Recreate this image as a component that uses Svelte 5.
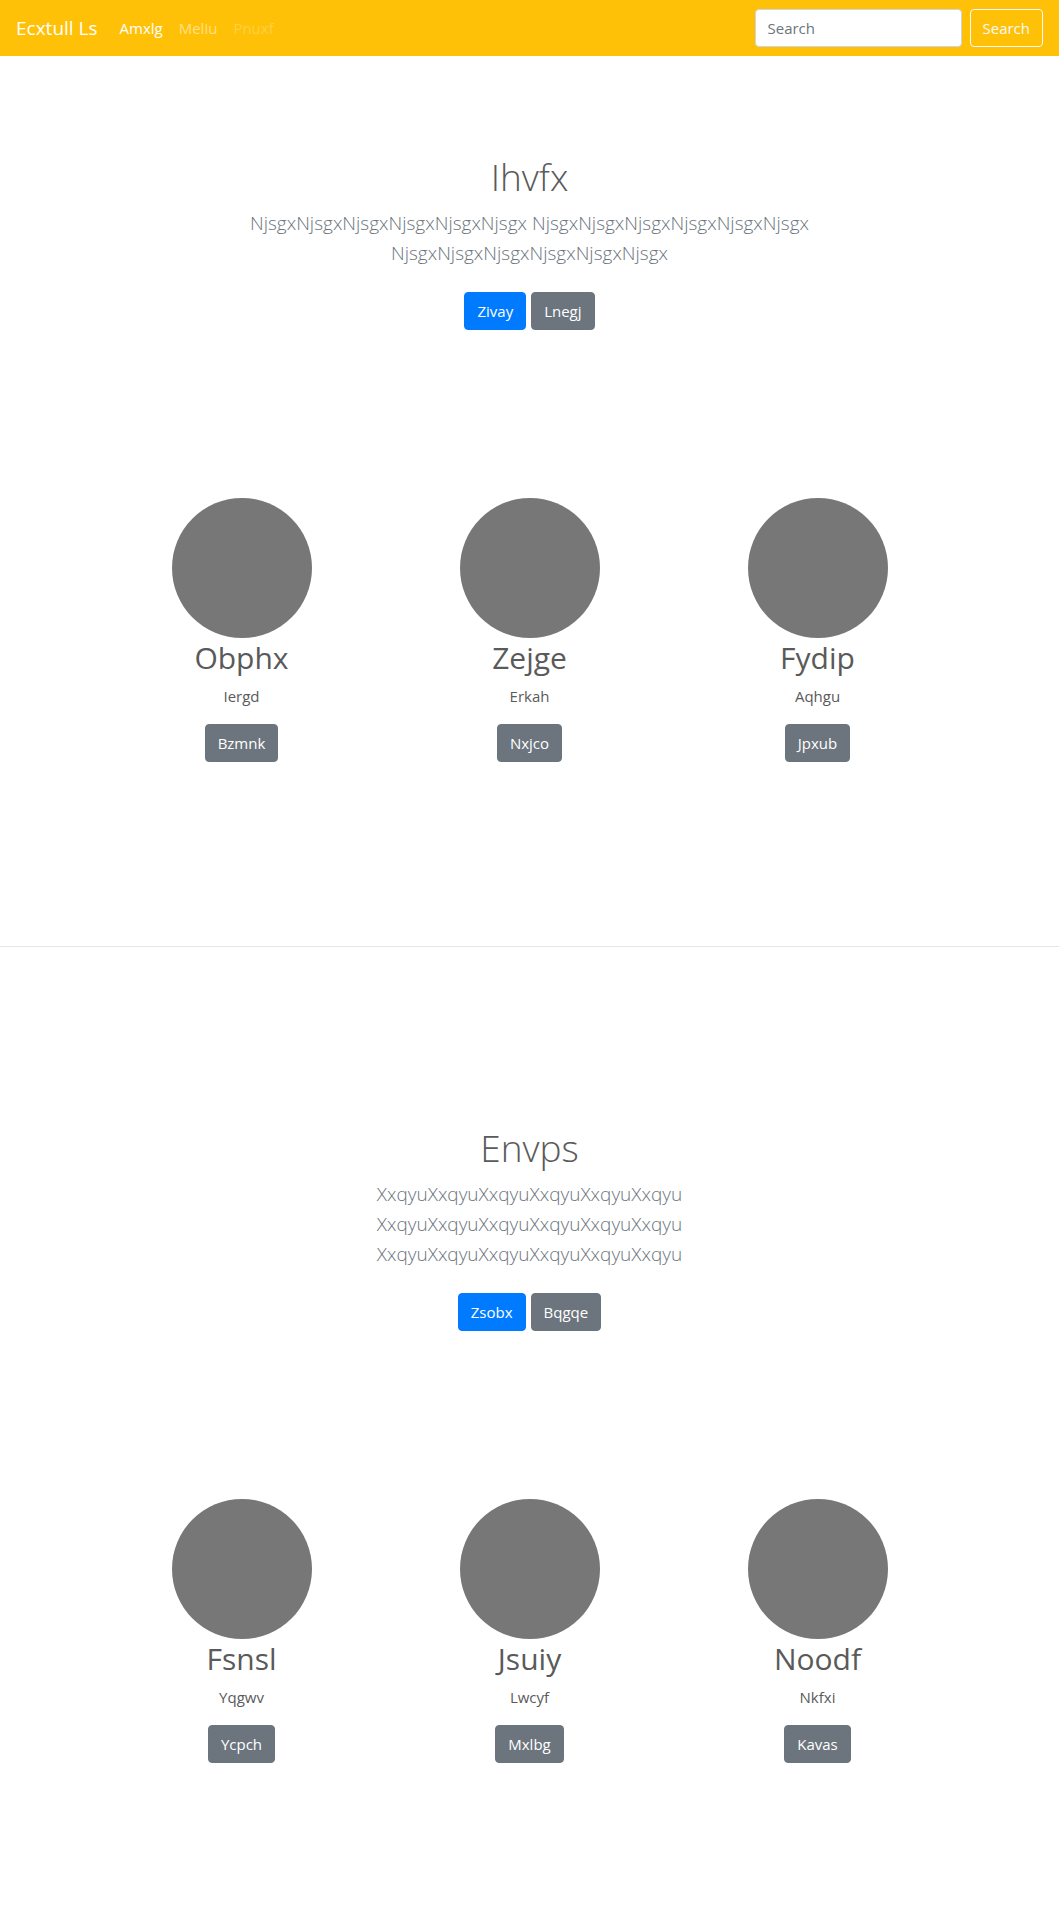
<script>
  const sections = [
    {
      title: 'Ihvfx',
      text: ['NjsgxNjsgxNjsgxNjsgxNjsgxNjsgx NjsgxNjsgxNjsgxNjsgxNjsgxNjsgx', 'NjsgxNjsgxNjsgxNjsgxNjsgxNjsgx'],
      primary: 'Zivay',
      secondary: 'Lnegj',
      items: [
        { name: 'Obphx', note: 'Iergd', action: 'Bzmnk' },
        { name: 'Zejge', note: 'Erkah', action: 'Nxjco' },
        { name: 'Fydip', note: 'Aqhgu', action: 'Jpxub' }
      ]
    },
    {
      title: 'Envps',
      text: ['XxqyuXxqyuXxqyuXxqyuXxqyuXxqyu', 'XxqyuXxqyuXxqyuXxqyuXxqyuXxqyu', 'XxqyuXxqyuXxqyuXxqyuXxqyuXxqyu'],
      primary: 'Zsobx',
      secondary: 'Bqgqe',
      items: [
        { name: 'Fsnsl', note: 'Yqgwv', action: 'Ycpch' },
        { name: 'Jsuiy', note: 'Lwcyf', action: 'Mxlbg' },
        { name: 'Noodf', note: 'Nkfxi', action: 'Kavas' }
      ]
    }
  ];
</script>

<header class="navbar">
  <a class="brand" href="#home">Ecxtull Ls</a>
  <nav>
    <a class="link active" href="#home">Amxlg</a>
    <a class="link" href="#link">Meliu</a>
    <a class="link disabled" href="#disabled" aria-disabled="true">Pnuxf</a>
  </nav>
  <form class="search" onsubmit={(e) => e.preventDefault()}>
    <input type="text" placeholder="Search" aria-label="Search" />
    <button class="btn outline" type="submit">Search</button>
  </form>
</header>

<main>
  {#each sections as section, i}
    {#if i > 0}<hr />{/if}
    <section class="hero">
      <h1>{section.title}</h1>
      <p class="lead">
        {#each section.text as line, n}{#if n > 0}<br />{/if}{line}{/each}
      </p>
      <div class="actions">
        <a class="btn primary" href="#primary">{section.primary}</a>
        <a class="btn secondary" href="#secondary">{section.secondary}</a>
      </div>
    </section>
    <section class="features">
      {#each section.items as item}
        <article>
          <svg class="avatar" viewBox="0 0 140 140" aria-hidden="true">
            <circle cx="70" cy="70" r="70" fill="#777" />
          </svg>
          <h2>{item.name}</h2>
          <p class="note">{item.note}</p>
          <a class="btn secondary" href="#details">{item.action}</a>
        </article>
      {/each}
    </section>
  {/each}
</main>

<style>
  :global(body) {
    background: #fff;
    color: #5a5a5a;
    font-family: 'Segoe UI', 'Open Sans', 'Noto Sans', sans-serif;
    font-size: 15px;
    line-height: 24px;
  }

  a {
    text-decoration: none;
  }

  h1,
  h2,
  p {
    margin: 0;
  }

  .navbar {
    display: flex;
    align-items: center;
    box-sizing: border-box;
    min-height: 56px;
    padding: 8px 16px;
    background: #ffc107;
  }

  .brand {
    margin-right: 14px;
    color: #fff;
    font-size: 19px;
    line-height: 30px;
  }

  nav {
    display: flex;
    margin-right: auto;
  }

  .link {
    padding: 8px;
    color: rgba(255, 255, 255, 0.5);
  }

  .link.active {
    color: #fff;
  }

  .link.disabled {
    color: rgba(255, 255, 255, 0.25);
  }

  .search {
    display: flex;
    gap: 8px;
  }

  input {
    box-sizing: border-box;
    width: 207px;
    height: 38px;
    padding: 6px 12px;
    border: 1px solid #ced4da;
    border-radius: 4px;
    background: #fff;
    color: #495057;
    font: inherit;
  }

  input::placeholder {
    color: #6c757d;
    opacity: 1;
  }

  .btn {
    display: inline-block;
    padding: 6px 12px;
    border: 1px solid transparent;
    border-radius: 4px;
    background: transparent;
    color: #fff;
    font: inherit;
    cursor: pointer;
  }

  .btn.outline {
    border-color: #f8f9fa;
    color: #f8f9fa;
  }

  .btn.primary {
    border-color: #007bff;
    background: #007bff;
  }

  .btn.secondary {
    border-color: #6c757d;
    background: #6c757d;
  }

  .hero {
    padding: 96px 16px 120px;
    text-align: center;
  }

  h1 {
    margin-bottom: 6px;
    font-size: 37px;
    font-weight: 300;
    line-height: 50px;
  }

  .lead {
    margin-bottom: 24px;
    color: #6c757d;
    font-size: 19px;
    font-weight: 300;
    line-height: 30px;
  }

  .actions {
    display: flex;
    justify-content: center;
    gap: 5px;
  }

  .features {
    display: grid;
    grid-template-columns: repeat(3, 1fr);
    box-sizing: border-box;
    max-width: 960px;
    margin: 0 auto;
    padding: 48px 48px 104px;
    text-align: center;
  }

  .avatar {
    display: block;
    width: 140px;
    height: 140px;
    margin: 0 auto;
  }

  h2 {
    margin-bottom: 6px;
    font-size: 30px;
    font-weight: 400;
    line-height: 40px;
  }

  .note {
    margin-bottom: 16px;
  }

  hr {
    margin: 80px 0;
    border: 0;
    border-top: 1px solid rgba(0, 0, 0, 0.1);
  }
</style>
